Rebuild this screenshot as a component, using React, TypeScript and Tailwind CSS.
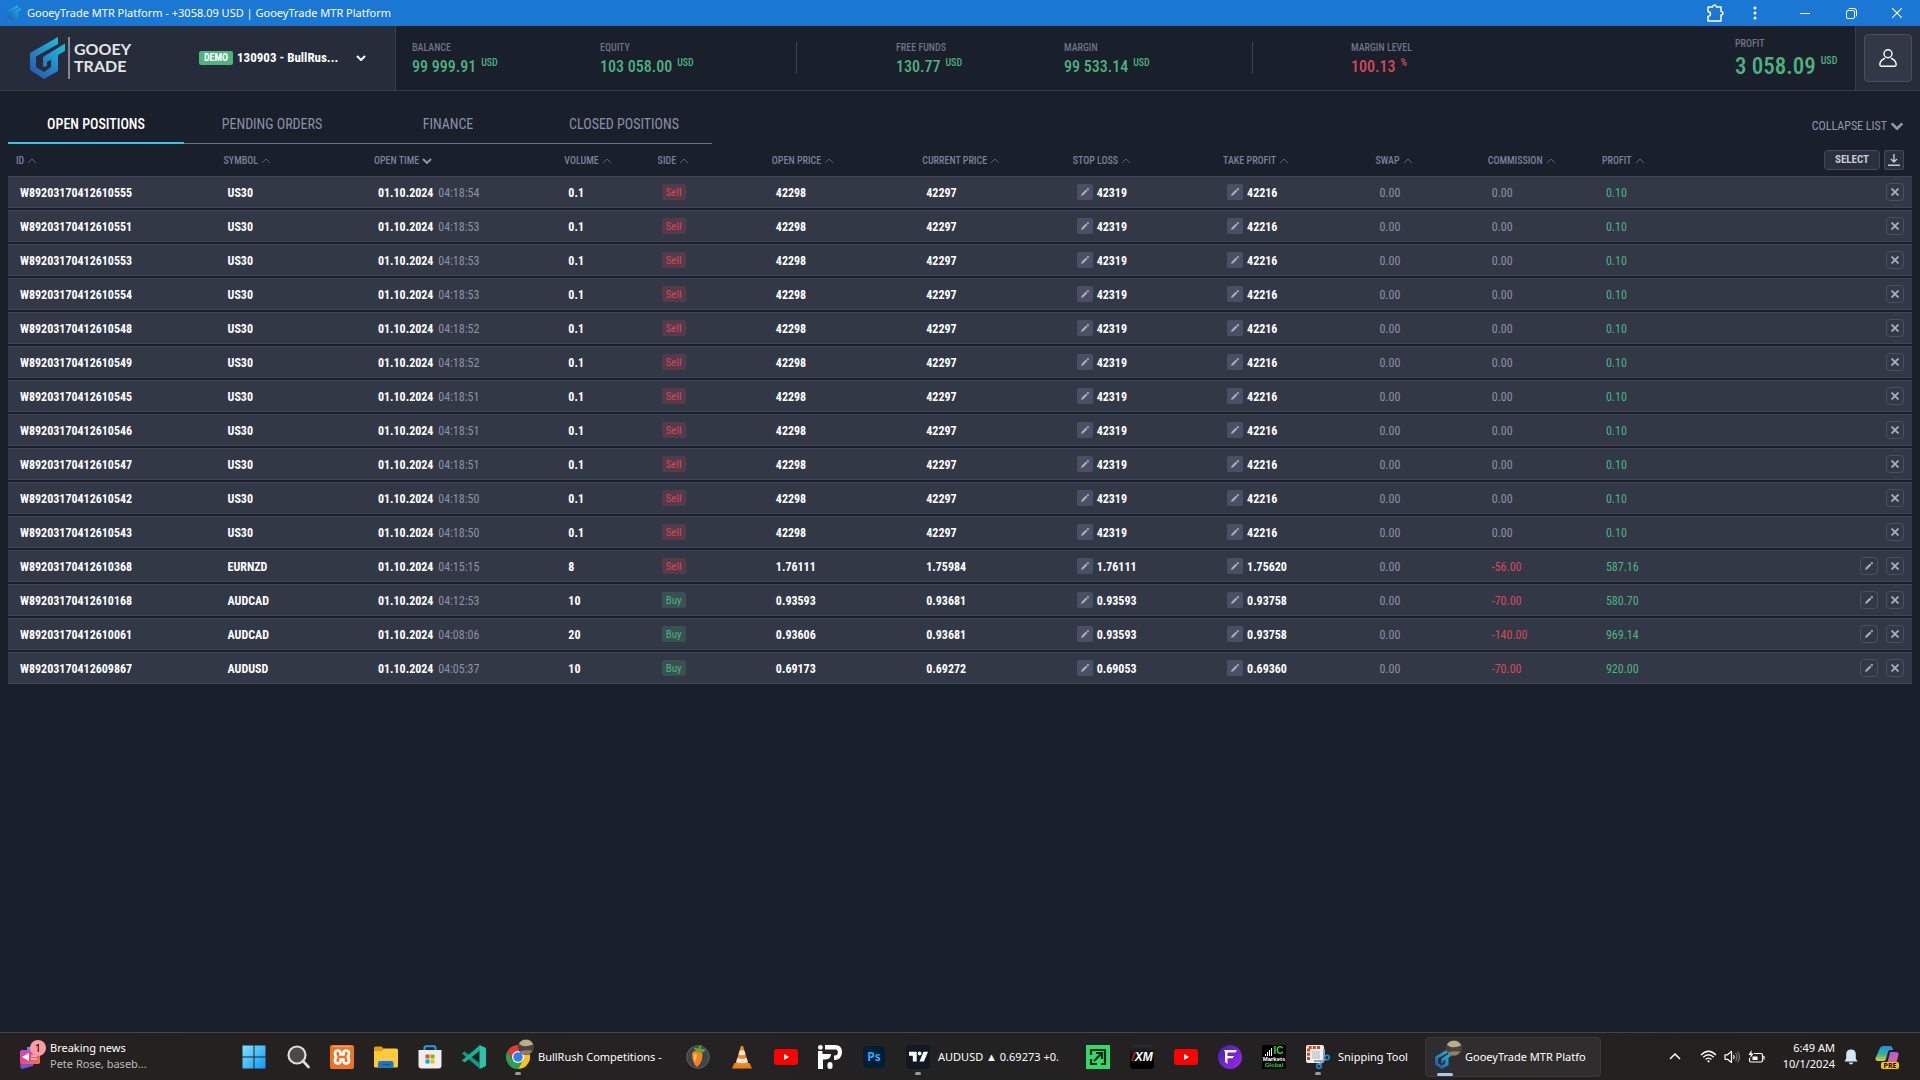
import type { ReactNode } from "react";
import { SiTradingview } from "react-icons/si";

type Position = {
  id: string;
  symbol: string;
  time: string;
  volume: string;
  side: "Sell" | "Buy";
  open: string;
  current: string;
  stopLoss: string;
  takeProfit: string;
  commission: string;
  profit: string;
  editable: boolean;
};

const us30 = (suffix: string, time: string): Position => ({
  id: `W89203170412610${suffix}`,
  symbol: "US30",
  time: `04:18:${time}`,
  volume: "0.1",
  side: "Sell",
  open: "42298",
  current: "42297",
  stopLoss: "42319",
  takeProfit: "42216",
  commission: "0.00",
  profit: "0.10",
  editable: false,
});

const positions: Position[] = [
  us30("555", "54"),
  us30("551", "53"),
  us30("553", "53"),
  us30("554", "53"),
  us30("548", "52"),
  us30("549", "52"),
  us30("545", "51"),
  us30("546", "51"),
  us30("547", "51"),
  us30("542", "50"),
  us30("543", "50"),
  { id: "W89203170412610368", symbol: "EURNZD", time: "04:15:15", volume: "8", side: "Sell", open: "1.76111", current: "1.75984", stopLoss: "1.76111", takeProfit: "1.75620", commission: "-56.00", profit: "587.16", editable: true },
  { id: "W89203170412610168", symbol: "AUDCAD", time: "04:12:53", volume: "10", side: "Buy", open: "0.93593", current: "0.93681", stopLoss: "0.93593", takeProfit: "0.93758", commission: "-70.00", profit: "580.70", editable: true },
  { id: "W89203170412610061", symbol: "AUDCAD", time: "04:08:06", volume: "20", side: "Buy", open: "0.93606", current: "0.93681", stopLoss: "0.93593", takeProfit: "0.93758", commission: "-140.00", profit: "969.14", editable: true },
  { id: "W89203170412609867", symbol: "AUDUSD", time: "04:05:37", volume: "10", side: "Buy", open: "0.69173", current: "0.69272", stopLoss: "0.69053", takeProfit: "0.69360", commission: "-70.00", profit: "920.00", editable: true },
];

const columns = [
  { label: "ID", width: "w-[10.9%]" },
  { label: "SYMBOL", width: "w-[7.9%]" },
  { label: "OPEN TIME", width: "w-[10%]" },
  { label: "VOLUME", width: "w-[4.9%]" },
  { label: "SIDE", width: "w-[6%]" },
  { label: "OPEN PRICE", width: "w-[7.9%]" },
  { label: "CURRENT PRICE", width: "w-[7.9%]" },
  { label: "STOP LOSS", width: "w-[7.9%]" },
  { label: "TAKE PROFIT", width: "w-[8%]" },
  { label: "SWAP", width: "w-[5.9%]" },
  { label: "COMMISSION", width: "w-[6%]" },
  { label: "PROFIT", width: "w-[7%]" },
];

function GooeyMark({ className, id }: { className: string; id: string }) {
  return (
    <svg viewBox="0 0 35 42" className={className} aria-hidden="true">
      <defs>
        <linearGradient id={id} x1="1" y1="0" x2="0.2" y2="1">
          <stop offset="0" stopColor="#1fc4dc" />
          <stop offset="0.5" stopColor="#2194cf" />
          <stop offset="1" stopColor="#2b58ae" />
        </linearGradient>
      </defs>
      <path fill={`url(#${id})`} d="M28 0v7L6 19.500V30l8 5 7-5v-7.500l-4 2.500v4l-4 1v-10L35 6.500V14l-7 4v16l-14 8L0 33V16Z" />
    </svg>
  );
}

function Caret({ down = false, className }: { down?: boolean; className: string }) {
  return (
    <svg viewBox="0 0 10 6" className={className} fill="none" stroke="currentColor" aria-hidden="true">
      <path d={down ? "M1 1l4 4 4-4" : "M1 5l4-4 4 4"} />
    </svg>
  );
}

function Pencil() {
  return (
    <svg viewBox="0 0 10 10" className="size-2.5" fill="currentColor" aria-hidden="true">
      <path d="M1 9l.7-2.200L6 2.600 7.400 4 3.200 8.300ZM6.600 2l.9-.9q.4-.3.800 0l.6.6q.3.400 0 .8l-.9.900Z" />
    </svg>
  );
}

function TitleBar() {
  return (
    <div className="flex h-[26px] shrink-0 items-center bg-[#1a77d4] pl-[7px] text-white">
      <GooeyMark id="mark-title" className="h-4 w-3.5" />
      <span className="ml-1.5 font-['Noto_Sans',sans-serif] text-[11px] leading-4">
        GooeyTrade MTR Platform - +3058.09 USD | GooeyTrade MTR Platform
      </span>
      <div className="ml-auto flex items-center">
        <button aria-label="Extensions" className="flex w-10 justify-center">
          <svg viewBox="0 0 18 18" className="size-[18px]" fill="none" stroke="currentColor" strokeWidth="1.500">
            <path d="M2 3h4.500Q7 1 8.500 1T10.500 3H15v4.500q2 .3 2 1.800t-2 1.800V17H2v-4.500q2.500-.5 2.500-2.500T2 7.500Z" strokeLinejoin="round" />
          </svg>
        </button>
        <button aria-label="Menu" className="flex w-10 justify-center">
          <svg viewBox="0 0 4 14" className="h-3.5 w-1" fill="currentColor">
            <circle cx="2" cy="2" r="1.500" />
            <circle cx="2" cy="7" r="1.500" />
            <circle cx="2" cy="12" r="1.500" />
          </svg>
        </button>
        <button aria-label="Minimize" className="ml-[7px] flex w-[46px] justify-center">
          <span className="h-px w-2.5 bg-white" />
        </button>
        <button aria-label="Restore" className="flex w-[46px] justify-center">
          <svg viewBox="0 0 11 11" className="size-[11px]" fill="none" stroke="currentColor">
            <rect x=".5" y="2.500" width="8" height="8" rx="1.500" />
            <path d="M2.500 1q.4-.5 1.500-.5h4q2.500 0 2.500 2.500v4q0 1-.5 1.500" />
          </svg>
        </button>
        <button aria-label="Close" className="flex w-[46px] justify-center">
          <svg viewBox="0 0 10 10" className="size-2.5" stroke="currentColor" strokeWidth="1.100">
            <path d="M0 0l10 10M10 0L0 10" />
          </svg>
        </button>
      </div>
    </div>
  );
}

function Stat({ label, value, unit, negative = false }: { label: string; value: string; unit: string; negative?: boolean }) {
  return (
    <div className="pt-4 whitespace-nowrap">
      <div className="text-[10px] leading-3 font-medium text-[#6d7386]">{label}</div>
      <div className={negative ? "mt-[3px] flex items-start gap-[5px] text-[#d64858]" : "mt-[3px] flex items-start gap-[5px] text-[#4db380]"}>
        <span className="text-base leading-5 font-medium">{value}</span>
        <span className="text-[10px] leading-3 font-medium">{unit}</span>
      </div>
    </div>
  );
}

function StatDivider() {
  return <div className="mt-4 h-8 border-l border-[#3d4252]" />;
}

function AccountHeader() {
  return (
    <header className="flex h-[65px] shrink-0 border-b border-[#363b4a]">
      <div className="flex w-[396px] shrink-0 items-center border-r border-[#3a3f4e] bg-[#272c3a] pl-[30px]">
        <GooeyMark id="mark-header" className="h-[42px] w-[35px]" />
        <span className="ml-[3px] h-[42px] w-0.5 bg-[#85878e]" />
        <span className="ml-1 pb-0.5 font-['Lato',sans-serif] text-[16px] leading-[17px] font-bold text-[#e4e5e7]">
          GOOEY
          <br />
          TRADE
        </span>
        <button className="ml-17 flex items-center text-white">
          <span className="flex h-3.5 w-[34px] items-center justify-center rounded-xs bg-[#4db380] text-[10px] leading-3 font-bold">DEMO</span>
          <span className="ml-1 w-[119px] text-left text-[13px] leading-4 font-bold whitespace-nowrap">130903 - BullRus...</span>
          <Caret down className="h-1.5 w-2.5 stroke-2" />
        </button>
      </div>
      <div className="grid min-w-0 flex-1 grid-cols-[188fr_196fr_100fr_168fr_188fr_99fr_384fr_120fr] pl-4">
        <Stat label="BALANCE" value="99 999.91" unit="USD" />
        <Stat label="EQUITY" value="103 058.00" unit="USD" />
        <StatDivider />
        <Stat label="FREE FUNDS" value="130.77" unit="USD" />
        <Stat label="MARGIN" value="99 533.14" unit="USD" />
        <StatDivider />
        <Stat label="MARGIN LEVEL" value="100.13" unit="%" negative />
        <div className="pt-3 whitespace-nowrap">
          <div className="text-[10px] leading-3 font-medium text-[#6d7386]">PROFIT</div>
          <div className="mt-[5px] flex items-start gap-[5px] text-[#4db380]">
            <span className="text-[23px] leading-6 font-medium">3 058.09</span>
            <span className="text-[10px] leading-3 font-medium">USD</span>
          </div>
        </div>
      </div>
      <div className="flex w-[65px] shrink-0 items-center justify-center border-l border-[#3a3f4e] bg-[#272c3a]">
        <button aria-label="Profile" className="flex size-12 items-center justify-center rounded-sm border border-[#4a5064] bg-[#333847] text-white">
          <svg viewBox="0 0 18 18" className="size-[18px]" fill="none" stroke="currentColor" strokeWidth="1.400" strokeLinejoin="round">
            <circle cx="9" cy="4.700" r="4" />
            <path d="M5.500 9.500Q1 11.500.8 15.500q0 1.700 1.700 1.700h13q1.700 0 1.700-1.700Q17 11.500 12.500 9.500" strokeLinecap="round" />
          </svg>
        </button>
      </div>
    </header>
  );
}

function TabBar() {
  const tabs = ["OPEN POSITIONS", "PENDING ORDERS", "FINANCE", "CLOSED POSITIONS"];
  return (
    <div className="mx-2 mt-3 flex h-[41px] shrink-0 items-end justify-between">
      <nav className="grid w-[704px] grid-cols-4">
        {tabs.map((tab, i) => (
          <button
            key={tab}
            className={
              i === 0
                ? "h-10 border-b-2 border-[#42bfe8] pt-0.5 text-sm font-medium text-white"
                : "h-10 border-b border-[#6d7386] pt-px text-sm text-[#8c91a6]"
            }
          >
            {tab}
          </button>
        ))}
      </nav>
      <button className="mr-2 mb-2.5 flex items-center gap-[3px] text-xs leading-4 text-[#9298ac]">
        COLLAPSE LIST
        <Caret down className="h-2 w-3.5 stroke-2" />
      </button>
    </div>
  );
}

function EditableValue({ value, label }: { value: string; label: string }) {
  return (
    <div className="flex items-center gap-1">
      <button aria-label={`Edit ${label}`} className="flex size-4 items-center justify-center rounded-xs bg-[#4a5064] text-[#a9aec0]">
        <Pencil />
      </button>
      <span className="pt-0.5 leading-4 font-bold text-white">{value}</span>
    </div>
  );
}

function PositionsTable() {
  const cell = "border-y border-[#414657] bg-[#333847] pt-px pl-3 text-left";
  const strong = "border-y border-[#414657] bg-[#333847] pt-px pl-3 text-left font-bold text-white";
  return (
    <div className="mx-2">
      <table className="w-full table-fixed border-separate border-spacing-x-0 border-spacing-y-0.5 text-[12px] leading-4 whitespace-nowrap text-[#8c91a6]">
        <thead>
          <tr className="h-7">
            {columns.map((c) => {
              const sorted = c.label === "OPEN TIME";
              return (
                <th key={c.label} scope="col" className={`${c.width} p-0 pt-0.5 pl-2 text-left align-middle text-[10px] leading-4 font-medium text-[#7b8196]`}>
                  <button className="flex items-center gap-[3px]">
                    {c.label}
                    <Caret down={sorted} className={sorted ? "h-1.5 w-2.5 stroke-2 text-[#9298ac]" : "h-1.5 w-2.5 text-[#5a6074]"} />
                  </button>
                </th>
              );
            })}
            <td className="p-0 pr-2">
              <div className="flex justify-end gap-1">
                <button className="h-5 w-14 rounded-sm border border-[#454b5c] bg-[#2b303e] text-[11px] leading-4 font-bold text-[#c9cad0]">SELECT</button>
                <button aria-label="Download" className="flex size-5 items-center justify-center rounded-xs border border-[#454b5c] bg-[#2b303e] text-[#c9cad0]">
                  <svg viewBox="0 0 12 12" className="size-3" fill="none" stroke="currentColor" strokeWidth="1.400">
                    <path d="M6 0v8M3 5l3 3 3-3M0 11.200h12" />
                  </svg>
                </button>
              </div>
            </td>
          </tr>
        </thead>
        <tbody>
          {positions.map((p) => (
            <tr key={p.id} className="h-8">
              <td className={strong}>{p.id}</td>
              <td className={strong}>{p.symbol}</td>
              <td className={cell}>
                <span className="mr-0.5 font-bold text-white">01.10.2024</span> {p.time}
              </td>
              <td className={strong}>{p.volume}</td>
              <td className="border-y border-[#414657] bg-[#333847] p-0 pl-3">
                <span
                  className={
                    p.side === "Sell"
                      ? "flex h-4 w-6 items-center justify-center rounded-xs bg-[#553b4a] pt-px text-[11px] text-[#d64858]"
                      : "flex h-4 w-6 items-center justify-center rounded-xs bg-[#385152] pt-px text-[11px] text-[#4db380]"
                  }
                >
                  {p.side}
                </span>
              </td>
              <td className={strong}>{p.open}</td>
              <td className={strong}>{p.current}</td>
              <td className="border-y border-[#414657] bg-[#333847] p-0 pl-3">
                <EditableValue value={p.stopLoss} label="stop loss" />
              </td>
              <td className="border-y border-[#414657] bg-[#333847] p-0 pl-3">
                <EditableValue value={p.takeProfit} label="take profit" />
              </td>
              <td className={cell}>0.00</td>
              <td className={cell}>
                <span className={p.commission.startsWith("-") ? "text-[#d64858]" : "text-[#8c91a6]"}>{p.commission}</span>
              </td>
              <td className={cell}>
                <span className="text-[#4db380]">{p.profit}</span>
              </td>
              <td className="border-y border-[#414657] bg-[#333847] p-0 pr-2">
                <div className="flex justify-end gap-2">
                  {p.editable && (
                    <button aria-label="Edit position" className="flex size-[18px] items-center justify-center rounded-sm border border-[#4a5064] text-[#a9aec0]">
                      <Pencil />
                    </button>
                  )}
                  <button aria-label="Close position" className="flex size-[18px] items-center justify-center rounded-sm border border-[#4a5064] text-[#a9aec0]">
                    <svg viewBox="0 0 8 8" className="size-2" stroke="currentColor" strokeWidth="1.800">
                      <path d="M.5.5l7 7M7.500.5l-7 7" />
                    </svg>
                  </button>
                </div>
              </td>
            </tr>
          ))}
        </tbody>
      </table>
    </div>
  );
}

function Icon({ children }: { children: ReactNode }) {
  return (
    <svg viewBox="0 0 24 24" className="size-6 shrink-0" aria-hidden="true">
      {children}
    </svg>
  );
}

function TaskItem({ name, label, running = false, active = false, children }: { name: string; label?: string; running?: boolean; active?: boolean; children: ReactNode }) {
  const shape = label
    ? active
      ? "relative flex h-10 w-44 items-center gap-1.5 rounded-sm border border-[#3d3a3b] bg-[#302d2e] pl-[9px]"
      : name === "Snipping Tool"
        ? "relative flex h-10 w-[123px] items-center gap-2 pl-2"
        : "relative flex h-10 w-44 items-center gap-2 pl-2"
    : "relative flex size-10 items-center justify-center";
  return (
    <button aria-label={name} className={shape}>
      {children}
      {label && <span className="whitespace-nowrap">{label}</span>}
      {running && <span className="absolute bottom-0.5 left-[17px] h-[3px] w-1.5 rounded-full bg-[#9a9a9a]" />}
      {active && <span className="absolute bottom-0 left-[11px] h-[3px] w-4 rounded-full bg-[#a9c8e4]" />}
    </button>
  );
}

function Avatar() {
  return (
    <svg viewBox="0 0 16 16" className="absolute top-0.5 left-5 size-4" aria-hidden="true">
      <circle cx="8" cy="8" r="8" fill="#4a443e" />
      <path d="M.8 5A8 8 0 0 1 15.200 5.500Q9 8 5 7Z" fill="#b9ad8a" />
      <path d="M1.500 12.500q6-2 13-1A8 8 0 0 1 3 14.200Z" fill="#8f7f72" />
    </svg>
  );
}

function YouTube() {
  return (
    <Icon>
      <rect y="4" width="24" height="16" rx="3" fill="#ff0000" />
      <path d="M10 9l5 3-5 3Z" fill="#fff" />
    </Icon>
  );
}

function Taskbar() {
  return (
    <footer className="flex h-12 shrink-0 items-center border-t border-[#474443] bg-linear-to-r from-[#262120] via-[#232223] to-[#241f1f] font-['Noto_Sans',sans-serif] text-[11px] leading-4 text-white">
      <button className="flex w-[234px] shrink-0 items-center pb-px pl-[18px] text-left">
        <span className="relative h-8 w-8">
          <svg viewBox="0 0 24 24" className="absolute top-1.5 left-0 size-6" aria-hidden="true">
            <defs>
              <linearGradient id="news" x1="0" y1="0" x2="1" y2="1">
                <stop offset="0" stopColor="#c04bd8" />
                <stop offset="0.5" stopColor="#f2457e" />
                <stop offset="1" stopColor="#f77b3c" />
              </linearGradient>
            </defs>
            <path d="M2 13l14 4-1 3-10 2.800q-2 .4-2.500-1Z" fill="#6a55dc" />
            <path d="M9 1h10v10H9Z" fill="#3aa0e8" />
            <rect x="2" y="4" width="20" height="14" rx="2" fill="url(#news)" />
            <path d="M4 11l7-4v8Z" fill="#fff" />
            <path d="M13 10h6M13 13h6" stroke="#f9c7bb" strokeWidth="1.500" />
          </svg>
          <span className="absolute top-0 left-3 flex size-4 items-center justify-center rounded-full bg-[#ff99a4] text-[11px] text-black">1</span>
        </span>
        <span>
          Breaking news
          <br />
          <span className="text-[#bdbbba]">Pete Rose, baseb...</span>
        </span>
      </button>
      <div className="flex shrink-0 items-center gap-1">
        <TaskItem name="Start">
          <Icon>
            <defs>
              <linearGradient id="win" x1="0" y1="0" x2="1" y2="1">
                <stop offset="0" stopColor="#7fe3fd" />
                <stop offset="1" stopColor="#1298f5" />
              </linearGradient>
            </defs>
            <path fill="url(#win)" d="M.5.5h11v11H.5ZM12.500.5h11v11h-11ZM.5 12.500h11v11H.5ZM12.500 12.500h11v11h-11Z" />
          </Icon>
        </TaskItem>
        <TaskItem name="Search">
          <Icon>
            <circle cx="11" cy="10" r="8.500" fill="#4b4848" stroke="#dcdcdc" strokeWidth="2.200" />
            <path d="M17 16l5.500 6" stroke="#dcdcdc" strokeWidth="2.600" strokeLinecap="round" />
          </Icon>
        </TaskItem>
        <TaskItem name="XAMPP">
          <Icon>
            <rect width="24" height="24" rx="2" fill="#ee7422" />
            <path d="M3 1.500h18" stroke="#f5a873" strokeWidth="1.200" />
            <path
              d="M8 5.500q-3 0-3 3t2 3.500q-2 .5-2 3.500t3 3q2.500 0 2.500-2.500V14.500h3V16q0 2.500 2.500 2.500 3 0 3-3T17 12q2-.5 2-3.500t-3-3q-2.500 0-2.500 2.500v1.500h-3V8Q10.500 5.500 8 5.500Z"
              fill="none"
              stroke="#fff"
              strokeWidth="2.600"
            />
          </Icon>
        </TaskItem>
        <TaskItem name="File Explorer">
          <Icon>
            <path d="M0 3q0-1.500 1.500-1.500h6L10 4v4H0Z" fill="#e39d0e" />
            <path d="M0 6h8l2-2.500h12.500Q24 3.500 24 5v16q0 1.500-1.500 1.500h-21Q0 22.500 0 21Z" fill="#fccb3d" />
            <path d="M4 22.500V18q0-2 2-2h11.500q2 0 2 2v4.500Z" fill="#1378cf" />
            <path d="M8 19.500h8" stroke="#0a539a" strokeWidth="1.200" />
          </Icon>
        </TaskItem>
        <TaskItem name="Microsoft Store">
          <Icon>
            <path d="M6.500 6V2.800q0-1.600 1.600-1.600h7.800q1.600 0 1.600 1.600V6" fill="none" stroke="#1ba2ee" strokeWidth="2" />
            <path d="M.5 5h23v15.500q0 3-3 3h-17q-3 0-3-3Z" fill="#eeeeef" />
            <path d="M7.500 9.500h4v4h-4Z" fill="#f25022" />
            <path d="M12.500 9.500h4v4h-4Z" fill="#7fba00" />
            <path d="M7.500 14.500h4v4h-4Z" fill="#00a4ef" />
            <path d="M12.500 14.500h4v4h-4Z" fill="#ffb900" />
          </Icon>
        </TaskItem>
        <TaskItem name="Visual Studio Code">
          <Icon>
            <path d="M17.500 0L24 3v18l-6.500 3Z" fill="#2bc5a6" />
            <path d="M0 8.500l2.500-2 15.500 12V24Z" fill="#129a80" />
            <path d="M0 15.500l2.500 2L18 5.500V0Z" fill="#17b395" />
          </Icon>
        </TaskItem>
        <TaskItem name="Chrome" label="BullRush Competitions -" running>
          <Icon>
            <path d="M12 12L1.600 6A12 12 0 0 1 22.400 6Z" fill="#e33b2e" />
            <path d="M12 12V6h10.400A12 12 0 0 1 12 24l5-9Z" fill="#fcc31e" />
            <path d="M12 12l5 3-5 9A12 12 0 0 1 1.600 6l5 9Z" fill="#2da04f" />
            <path d="M1.600 6H12v6L6.800 15Z" fill="#e33b2e" />
            <circle cx="12" cy="12" r="6" fill="#fff" />
            <circle cx="12" cy="12" r="4.800" fill="#3b7ded" />
          </Icon>
          <Avatar />
        </TaskItem>
        <TaskItem name="FL Studio">
          <Icon>
            <circle cx="12" cy="12" r="11.300" fill="#3e4448" stroke="#5c6468" />
            <path d="M6 9q1-4 6-2.500 5-.5 4.500 4.500-1 8-5.500 11-5-4-5-13Z" fill="#f4801f" />
            <path d="M8 9q2-1 3 1-1 5-2 7-2-4-1-8Z" fill="#ffc56b" />
            <path d="M12 7q-4-2-4-4 3-1 4 1 1-4 4-4-2 3-1 4 4-1 4 2-3 3-7 1Z" fill="#5fa82f" />
          </Icon>
        </TaskItem>
        <TaskItem name="VLC">
          <Icon>
            <path d="M4.500 18h15l2.500 5.500H2Z" fill="#f08011" />
            <path d="M11 1h2l5.500 18q-6.500 3-13 0Z" fill="#f58a1b" />
            <path d="M9.700 5.500h4.600l1.200 4q-3.500 1.500-7 0ZM7.400 13q4.600 2 9.200 0l1.200 4q-5.800 2.500-11.600 0Z" fill="#e6e7ea" />
          </Icon>
        </TaskItem>
        <TaskItem name="YouTube">
          <YouTube />
        </TaskItem>
        <TaskItem name="Prop Firm">
          <Icon>
            <path d="M7 0h10q7 0 7 7t-7 8h-1v-4.500h1q2.800 0 2.800-3.200T17 4.500H7Z" fill="#fff" />
            <path d="M0 6h4.500v3H13q0 5-5.500 5.500H5V24H0Z" fill="#fff" />
            <circle cx="2.400" cy="2.400" r="2.400" fill="#fff" />
            <rect x="9.500" y="17" width="5" height="7" rx="2.500" fill="#fff" />
          </Icon>
        </TaskItem>
        <TaskItem name="Photoshop">
          <span className="flex size-[22px] items-center justify-center rounded-sm bg-[#001e36] text-[12px] font-bold text-[#31a8ff]">Ps</span>
        </TaskItem>
        <TaskItem name="TradingView" label="AUDUSD ▲ 0.69273 +0." running>
          <span className="flex size-6 shrink-0 items-center justify-center rounded-sm bg-[#131722]">
            <SiTradingview className="size-[19px]" />
          </span>
        </TaskItem>
        <TaskItem name="Trade Station">
          <Icon>
            <rect width="24" height="24" fill="#35d96b" />
            <path d="M5 10V5h14v14h-4M5 14v5h6M8 16l8-8M10 8h6v6" fill="none" stroke="#0b2a1a" strokeWidth="2.200" />
          </Icon>
        </TaskItem>
        <TaskItem name="XM">
          <span className="flex size-6 items-center justify-center rounded-sm bg-linear-to-b from-[#2c2c2c] to-black font-['Liberation_Sans',sans-serif] text-[12px] font-bold italic">
            <span className="text-[#e01a22]">/</span>XM
          </span>
        </TaskItem>
        <TaskItem name="YouTube Studio">
          <YouTube />
        </TaskItem>
        <TaskItem name="Funding">
          <Icon>
            <defs>
              <linearGradient id="fund" x1="0" y1="0" x2="1" y2="1">
                <stop offset="0" stopColor="#3d1fb0" />
                <stop offset="1" stopColor="#a32be6" />
              </linearGradient>
            </defs>
            <circle cx="12" cy="12" r="12" fill="url(#fund)" />
            <path d="M6 5h13l-1.500 2.500H9.500V11H16l-1.500 2.200h-5V19L7 17V7Z" fill="#fff" />
          </Icon>
        </TaskItem>
        <TaskItem name="IC Markets Global">
          <span className="flex size-6 flex-col items-center justify-center overflow-hidden bg-black font-['Liberation_Sans',sans-serif] text-[6px] leading-[6px] font-bold">
            <span className="flex items-end gap-px text-[10px] leading-[10px] text-[#35d02f]">
              <svg viewBox="0 0 8 8" className="size-2" fill="#fff" aria-hidden="true">
                <path d="M0 6h1v2H0ZM2 4h1v4H2ZM4 2h1v6H4ZM6 0h1v8H6Z" />
              </svg>
              IC
            </span>
            <span>Markets</span>
            <span className="text-[#35d02f]">Global</span>
          </span>
        </TaskItem>
        <TaskItem name="Snipping Tool" label="Snipping Tool" running>
          <Icon>
            <rect width="18" height="18" rx="2" fill="#f1f1f1" />
            <path d="M2.500 15V2.500H14" fill="none" stroke="#d9441c" strokeWidth="3" strokeDasharray="3 1.200" />
            <rect x="6" y="6" width="8" height="8" fill="#cfd2d6" />
            <path d="M18 4v11l-5 5M8 16h10" stroke="#9da1a8" strokeWidth="2" fill="none" />
            <circle cx="21" cy="12.500" r="2.300" fill="none" stroke="#1e90e0" strokeWidth="1.600" />
            <circle cx="13" cy="21" r="2.300" fill="none" stroke="#1e90e0" strokeWidth="1.600" />
          </Icon>
        </TaskItem>
        <TaskItem name="GooeyTrade" label="GooeyTrade MTR Platfo" active>
          <span className="flex size-6 shrink-0 items-end justify-start">
            <GooeyMark id="mark-task" className="h-5 w-[17px]" />
          </span>
          <Avatar />
        </TaskItem>
      </div>
      <div className="ml-auto flex items-center pr-[21px]">
        <button aria-label="Hidden icons" className="mr-[19px]">
          <svg viewBox="0 0 12 7" className="h-[7px] w-3" fill="none" stroke="currentColor" strokeWidth="1.500">
            <path d="M1 6l5-5 5 5" />
          </svg>
        </button>
        <button aria-label="Network, volume and battery" className="flex items-center gap-[7px]">
          <svg viewBox="0 0 17 13" className="h-[13px] w-[17px]" fill="none" stroke="currentColor" strokeWidth="1.300">
            <path d="M1 5q7.500-7.500 15 0M3.200 7.300q5.300-5 10.600 0M5.500 9.500q3-2.800 6 0" />
            <circle cx="8.500" cy="11.300" r="1.100" fill="currentColor" stroke="none" />
          </svg>
          <svg viewBox="0 0 17 14" className="h-3.5 w-[17px]" fill="none" stroke="currentColor" strokeWidth="1.200">
            <path d="M1 4.800h2.500L7.500 1.500v11L3.500 9.300H1ZM9.500 5q1.500 2 0 4" strokeLinejoin="round" />
            <path d="M11.500 3q3 4 0 8M13.500 1.500q4 5.500 0 11" stroke="#77797c" />
          </svg>
          <svg viewBox="0 0 17 14" className="h-3.5 w-[17px]" fill="none" stroke="currentColor" strokeWidth="1.200">
            <path d="M6 3.500h7q1.500 0 1.500 1.500v5.500q0 1.500-1.500 1.500H3q-1.500 0-1.500-1.500V8M16 6v3.500" />
            <path d="M4.500 6.500h5v3.500h-5ZM3.500 0L.5 5h2v3l3-4.500h-2Z" fill="currentColor" stroke="none" />
          </svg>
        </button>
        <button className="ml-[18px] pb-0.5 text-right text-white">
          6:49 AM
          <br />
          10/1/2024
        </button>
        <button aria-label="Notifications" className="ml-[9px]">
          <svg viewBox="0 0 14 16" className="h-4 w-3.5" fill="#cfe9f5">
            <path d="M7 .5q4.800 0 4.800 5V9.500l1.700 3H.5l1.700-3V5.500q0-5 4.800-5ZM4.800 13.500h4.400q-.5 2-2.200 2t-2.200-2Z" />
          </svg>
        </button>
        <button aria-label="Copilot preview" className="relative ml-[17px] flex size-6">
          <Icon>
            <defs>
              <linearGradient id="cop-a" x1="0" y1="0" x2="0" y2="1">
                <stop offset="0" stopColor="#1e8df0" />
                <stop offset="0.6" stopColor="#39b88b" />
                <stop offset="1" stopColor="#f0c930" />
              </linearGradient>
              <linearGradient id="cop-b" x1="0" y1="0" x2="0" y2="1">
                <stop offset="0" stopColor="#a65cf0" />
                <stop offset="1" stopColor="#f2617a" />
              </linearGradient>
            </defs>
            <path d="M8 1h7q2 0 2.500 2l.5 2h-3q-1.500 0-2 2l-2 7q-.5 2-2.500 2H3q-3 0-2.500-3L5 3q.8-2 3-2Z" fill="url(#cop-a)" />
            <path d="M15 7h6q3 0 2.500 3l-2 7q-.7 2-3 2H10q2 0 2.500-2l2-7Z" fill="url(#cop-b)" />
          </Icon>
          <span className="absolute bottom-0 left-1.5 flex h-[7px] w-[18px] items-center justify-center rounded-xs bg-[#fbc50f] text-[7px] leading-[7px] font-bold text-black">PRE</span>
        </button>
      </div>
    </footer>
  );
}

export default function App() {
  return (
    <div className="flex min-h-screen flex-col bg-[#1a1f2c] font-['Roboto_Condensed','Roboto',sans-serif]">
      <TitleBar />
      <AccountHeader />
      <main className="flex flex-1 flex-col">
        <TabBar />
        <PositionsTable />
      </main>
      <Taskbar />
    </div>
  );
}
